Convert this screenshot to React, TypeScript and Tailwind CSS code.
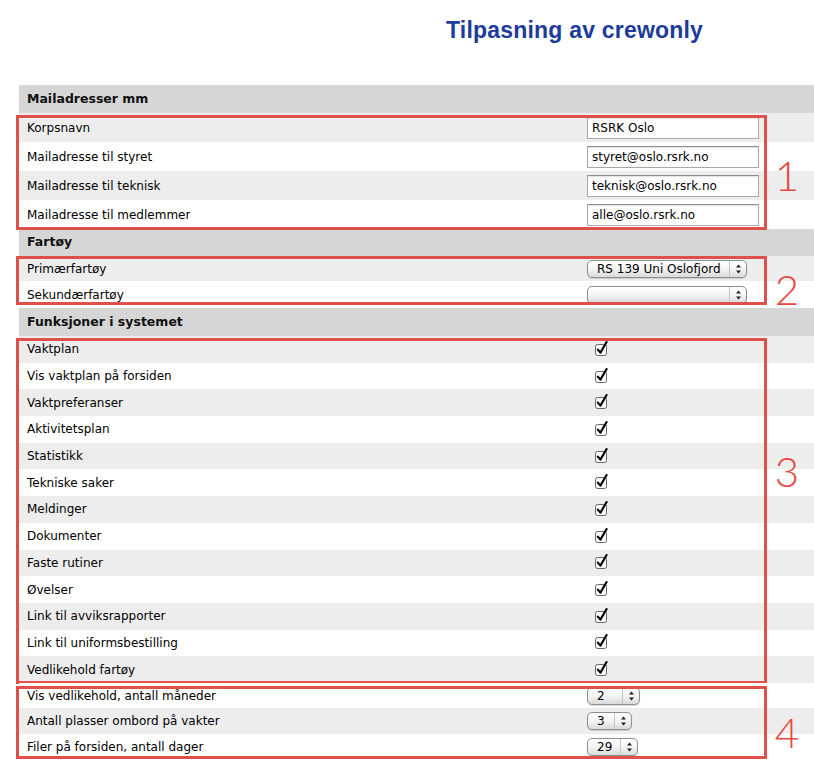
import React from 'react';

const label = "font-['DejaVu_Sans',sans-serif] text-[12px] text-black";

function Header({ title, h }: { title: string; h: string }) {
  return (
    <div className={`flex items-center bg-[#d6d6d6] pl-[8px] ${h}`}>
      <span className="font-['DejaVu_Sans',sans-serif] text-[12.5px] font-bold text-[#111]">{title}</span>
    </div>
  );
}

function Row({ text, gray, h, children }: { text: string; gray: boolean; h: string; children?: React.ReactNode }) {
  return (
    <div className={`flex items-center ${h} ${gray ? 'bg-[#ededed]' : 'bg-white'}`}>
      <div className={`w-[568px] pl-[8px] ${label}`}>{text}</div>
      <div className="flex items-center">{children}</div>
    </div>
  );
}

function Field({ value }: { value: string }) {
  return (
    <div className="flex h-[22px] w-[172px] items-center border border-[#a9a9a9] border-t-[#8e8e8e] bg-white px-[4px] font-['DejaVu_Sans',sans-serif] text-[12px] text-black shadow-[inset_0_1px_1px_rgba(0,0,0,0.12)]">
      {value}
    </div>
  );
}

function Arrows() {
  return (
    <svg width="7" height="10" viewBox="0 0 7 10">
      <path d="M3.5 0.5 L6 3.5 L1 3.5 Z" fill="#222" />
      <path d="M3.5 9.5 L6 6.5 L1 6.5 Z" fill="#222" />
    </svg>
  );
}

function Popup({ value, w }: { value: string; w: string }) {
  return (
    <div className={`flex h-[18px] ${w} items-stretch overflow-hidden rounded-[5px] border border-[#8f8f8f] bg-gradient-to-b from-white via-[#f4f4f4] to-[#dadada] shadow-[0_1px_1px_rgba(0,0,0,0.15)]`}>
      <div className="flex flex-1 items-center pl-[9px] font-['DejaVu_Sans',sans-serif] text-[12px] leading-none text-black">{value}</div>
      <div className="flex w-[17px] items-center justify-center border-l border-[#c4c4c4]">
        <Arrows />
      </div>
    </div>
  );
}

function Check() {
  return (
    <svg width="16" height="16" viewBox="0 0 16 16" className="ml-[7px] -mt-[3px]">
      <rect x="1.5" y="4.5" width="11" height="11" rx="2" fill="#fafafa" stroke="#666" />
      <path d="M3.8 9.6 L6.4 12.6 L12.6 2" fill="none" stroke="#000" strokeWidth="2.1" strokeLinecap="round" strokeLinejoin="round" />
    </svg>
  );
}

function Group({ n, box, num, children }: { n: string; box: string; num: string; children: React.ReactNode }) {
  return (
    <div className="relative">
      {children}
      <div className={`pointer-events-none absolute -left-[3px] right-[47px] border-[3px] border-[#e0504a] ${box}`} />
      <span className={`absolute right-[15px] font-['Lato',sans-serif] text-[42px] font-light leading-none text-[#e8463c] ${num}`}>{n}</span>
    </div>
  );
}

const features = [
  'Vaktplan',
  'Vis vaktplan på forsiden',
  'Vaktpreferanser',
  'Aktivitetsplan',
  'Statistikk',
  'Tekniske saker',
  'Meldinger',
  'Dokumenter',
  'Faste rutiner',
  'Øvelser',
  'Link til avviksrapporter',
  'Link til uniformsbestilling',
  'Vedlikehold fartøy',
];

export default function App() {
  return (
    <div className="h-[761px] w-[814px] overflow-hidden bg-white">
      <div className="h-[85px] pl-[446px] pt-[13px]">
        <h1 className="font-['Liberation_Sans',Arial,sans-serif] text-[23px] font-bold tracking-[0.2px] text-[#1c3b9b]">
          Tilpasning av crewonly
        </h1>
      </div>
      <div className="pl-[19px]">
        <Header title="Mailadresser mm" h="h-[28px]" />
        <Group n="1" box="top-[2px] -bottom-[1px]" num="top-[41px]">
          <Row text="Korpsnavn" gray h="h-[29px]"><Field value="RSRK Oslo" /></Row>
          <Row text="Mailadresse til styret" gray={false} h="h-[29px]"><Field value="styret@oslo.rsrk.no" /></Row>
          <Row text="Mailadresse til teknisk" gray h="h-[29px]"><Field value="teknisk@oslo.rsrk.no" /></Row>
          <Row text="Mailadresse til medlemmer" gray={false} h="h-[29px]"><Field value="alle@oslo.rsrk.no" /></Row>
        </Group>
        <Header title="Fartøy" h="h-[27px]" />
        <Group n="2" box="top-[0px] bottom-[3px]" num="top-[12px]">
          <Row text="Primærfartøy" gray h="h-[25px]"><Popup value="RS 139 Uni Oslofjord" w="w-[160px]" /></Row>
          <Row text="Sekundærfartøy" gray={false} h="h-[27px]"><Popup value="" w="w-[160px]" /></Row>
        </Group>
        <Header title="Funksjoner i systemet" h="h-[28px]" />
        <Group n="3" box="top-[2px] -bottom-[1px]" num="top-[114px]">
          {features.map((f, i) => (
            <Row key={f} text={f} gray={i % 2 === 0} h="h-[26.7px]"><Check /></Row>
          ))}
        </Group>
        <Group n="4" box="top-[3px] bottom-[0px]" num="top-[28px]">
          <Row text="Vis vedlikehold, antall måneder" gray={false} h="h-[25.5px]"><Popup value="2" w="w-[53px]" /></Row>
          <Row text="Antall plasser ombord på vakter" gray h="h-[25.5px]"><Popup value="3" w="w-[45px]" /></Row>
          <Row text="Filer på forsiden, antall dager" gray={false} h="h-[25.5px]"><Popup value="29" w="w-[51px]" /></Row>
        </Group>
      </div>
    </div>
  );
}
